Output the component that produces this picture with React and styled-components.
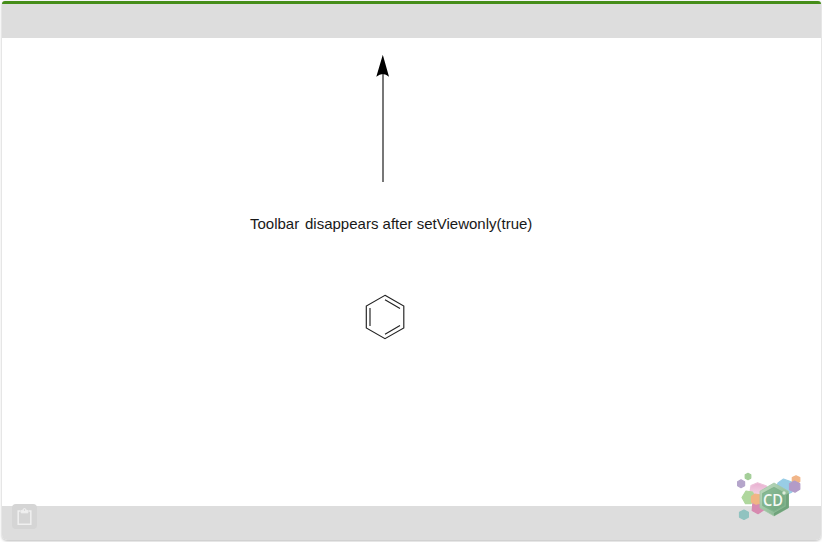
import React from "react";
import styled, { createGlobalStyle } from "styled-components";

const GlobalStyle = createGlobalStyle`
  * { box-sizing: border-box; }
  body { margin: 0; background: #fff; overflow: hidden; font-family: "Liberation Sans", Arial, sans-serif; }
`;

const Page = styled.div`
  height: 542px;
  padding: 1px 1px 1px 2px;
  background: #fff;
`;

const Editor = styled.main`
  position: relative;
  display: flex;
  flex-direction: column;
  height: 539px;
  border-top: 3px solid #458d19;
  border-radius: 3px 3px 5px 5px;
  background: #fff;
  box-shadow: 0 1px 3px rgba(0, 0, 0, 0.28);
  overflow: hidden;
`;

const Toolbar = styled.header`
  flex: 0 0 34px;
  background: #dddddd;
`;

const Canvas = styled.section`
  position: relative;
  flex: 1;
  background: #fff;
`;

const Drawing = styled.svg`
  display: block;
  width: 819px;
  height: 468px;
`;

const Label = styled.span`
  position: absolute;
  left: ${(p) => p.$x}px;
  top: 177px;
  font-size: 15px;
  line-height: 18px;
  color: #181818;
  white-space: nowrap;
`;

const StatusBar = styled.footer`
  flex: 0 0 34px;
  display: flex;
  padding-left: 10px;
  background: #dddddd;
`;

const PasteButton = styled.button`
  display: grid;
  place-items: center;
  width: 25px;
  height: 25px;
  margin-top: -2px;
  padding: 0;
  border: 0;
  border-radius: 4px;
  background: #d5d5d5;
  z-index: 1;
`;

const Logo = styled.svg`
  position: absolute;
  left: 728px;
  top: 461px;
  width: 80px;
  height: 60px;
  z-index: 2;
`;

function ClipboardIcon() {
  return (
    <svg width="17" height="19" viewBox="0 0 17 19" fill="none" stroke="#f0f0f0" strokeWidth="1.5">
      <path d="M4.5 4H2.2V17.2H14.8V4H12.5" />
      <path d="M5.2 3.6H6.8C7 0.8 10 0.8 10.2 3.6H11.8V5.8H5.2Z" fill="#f0f0f0" strokeWidth="1" />
      <circle cx="8.5" cy="3" r="0.7" fill="#cccccc" stroke="none" />
    </svg>
  );
}

function ProductLogo() {
  return (
    <Logo viewBox="0 0 80 60" aria-label="CD">
      <defs>
        <linearGradient id="hex" x1="0" y1="0" x2="1" y2="1">
          <stop offset="0" stopColor="#c3dcc3" />
          <stop offset="0.5" stopColor="#9cc5a3" />
          <stop offset="1" stopColor="#7eb08a" />
        </linearGradient>
        <linearGradient id="face" x1="0" y1="0" x2="1" y2="1">
          <stop offset="0" stopColor="#8dbd98" />
          <stop offset="1" stopColor="#6fa67f" />
        </linearGradient>
        <linearGradient id="pink" x1="0" y1="0" x2="0" y2="1">
          <stop offset="0" stopColor="#e9aed0" />
          <stop offset="1" stopColor="#f2dbe8" />
        </linearGradient>
        <filter id="soft"><feGaussianBlur stdDeviation="0.5" /></filter>
      </defs>
      <g filter="url(#soft)" strokeLinejoin="round" strokeWidth="1.2">
        <path d="M11 14.8L14.6 16.8V20.7L11 22.7L7.6 20.7V16.8Z" fill="#b5a5cb" stroke="#b5a5cb" />
        <path d="M18 8.4L20.8 9.9V13.1L18 14.6L15.2 13.1V9.9Z" fill="#a4ce98" stroke="#a4ce98" />
        <path d="M14 45L18.4 47.4V52.1L14 54.5L9.5 52.1V47.4Z" fill="#91c3c0" stroke="#91c3c0" />
        <path d="M27.5 17.7L36.5 21L38 29L28 32L20 27L21 20.5Z" fill="url(#pink)" stroke="#edc2da" />
        <path d="M16 26L22.5 27L25 32.5L21 38.7H15.5L12 32.5Z" fill="#afd79d" stroke="#afd79d" />
        <path d="M23 36.5L31 34.5L35 44L28 48.7L22.2 45.5Z" fill="#d78ab0" stroke="#d78ab0" />
        <path d="M25 29L31 30V38L26 39.2L21.5 37V31.5Z" fill="#f0b584" stroke="#f0b584" />
        <path d="M53.5 14L62.5 17.3L62 27L56 30L46.5 24L48 18Z" fill="#98cde6" stroke="#98cde6" />
        <path d="M66 10.8L69.8 12.6V16.6L66 18.6L62.3 16.6V12.6Z" fill="#f1b588" stroke="#f1b588" />
        <path d="M64.5 16L69.8 18.7V24.2L65 27.2L59.5 24.8V18.7Z" fill="#b39bc8" stroke="#b39bc8" />
        <path d="M44 18L58.5 26.2V42.8L44 51L30 42.8V26.2Z" fill="url(#hex)" stroke="#a2c8a6" strokeWidth="0.8" />
        <path d="M44 22.5L55 28.5V40.5L44 46.5L32.8 40.5V28.5Z" fill="url(#face)" stroke="#80b38c" />
        <path d="M58.8 28V42.8L44 51V48L55.8 41.3V30Z" fill="#70a37c" />
        <circle cx="54" cy="28" r="1.7" fill="#ddecda" />
      </g>
      <text x="33" y="41.2" fill="#f5faf5" fontFamily="Open Sans, sans-serif" fontSize="16" fontWeight="600" textLength="20" lengthAdjust="spacingAndGlyphs">CD</text>
    </Logo>
  );
}

export default function App() {
  return (
    <Page>
      <GlobalStyle />
      <Editor>
        <Toolbar />
        <Canvas>
          <Drawing viewBox="2 38 819 468" fill="none">
            <path d="M383 74V182" stroke="#777" strokeWidth="2" />
            <path d="M382.8 54.8L389 76.8Q383 71 376.3 76.8Z" fill="#000" />
            <g stroke="#222" strokeWidth="1.15">
              <path d="M385 295.3L403.8 306V328L385 338.7L366.3 328V306Z" />
              <path d="M370 308V326M385 299.7L400 308.4M385 334.3L400 325.6" />
            </g>
          </Drawing>
          <Label $x={248}>Toolbar</Label>
          <Label $x={303}>disappears after setViewonly(true)</Label>
        </Canvas>
        <StatusBar>
          <PasteButton aria-label="Paste"><ClipboardIcon /></PasteButton>
        </StatusBar>
        <ProductLogo />
      </Editor>
    </Page>
  );
}
